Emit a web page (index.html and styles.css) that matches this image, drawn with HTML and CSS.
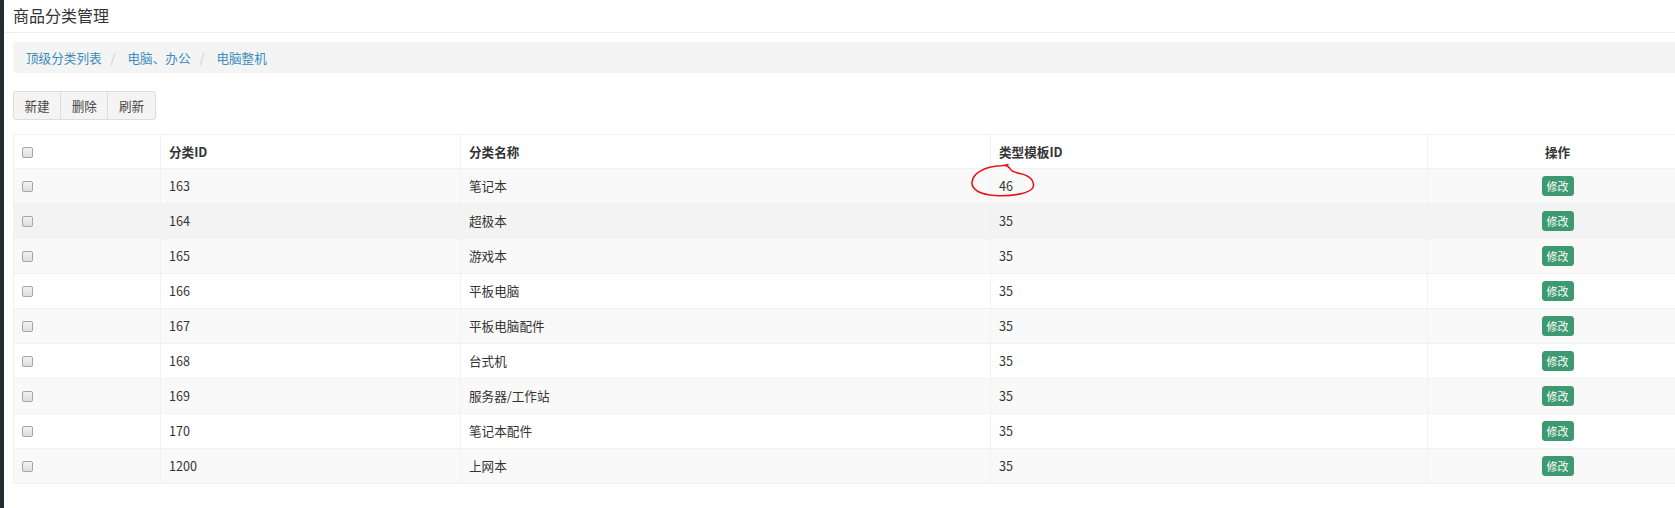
FILE: index.html
```html
<!DOCTYPE html>
<html lang="zh-CN">
<head>
<meta charset="utf-8">
<title>商品分类管理</title>
<link rel="stylesheet" href="styles.css">
</head>
<body>
<div class="app">
  <div class="sidebar"></div>
  <div class="main">
    <div class="page-header"><h1>商品分类管理</h1></div>
    <div class="content">
      <ol class="breadcrumb">
        <li><a href="#">顶级分类列表</a></li>
        <li class="sep">/</li>
        <li><a href="#">电脑、办公</a></li>
        <li class="sep">/</li>
        <li><a href="#">电脑整机</a></li>
      </ol>
      <div class="btn-group">
        <button class="btn">新建</button><button class="btn">删除</button><button class="btn">刷新</button>
      </div>
      <div class="table-wrap">
        <table class="grid">
          <colgroup>
            <col class="c1"><col class="c2"><col class="c3"><col class="c4"><col class="c5">
          </colgroup>
          <thead>
            <tr><th><span class="cb"></span></th><th>分类ID</th><th>分类名称</th><th>类型模板ID</th><th class="center">操作</th></tr>
          </thead>
          <tbody>
            <tr class="odd"><td><span class="cb"></span></td><td>163</td><td>笔记本</td><td>46</td><td class="center"><button class="edit">修改</button></td></tr>
            <tr class="hover"><td><span class="cb"></span></td><td>164</td><td>超极本</td><td>35</td><td class="center"><button class="edit">修改</button></td></tr>
            <tr class="odd"><td><span class="cb"></span></td><td>165</td><td>游戏本</td><td>35</td><td class="center"><button class="edit">修改</button></td></tr>
            <tr><td><span class="cb"></span></td><td>166</td><td>平板电脑</td><td>35</td><td class="center"><button class="edit">修改</button></td></tr>
            <tr class="odd"><td><span class="cb"></span></td><td>167</td><td>平板电脑配件</td><td>35</td><td class="center"><button class="edit">修改</button></td></tr>
            <tr><td><span class="cb"></span></td><td>168</td><td>台式机</td><td>35</td><td class="center"><button class="edit">修改</button></td></tr>
            <tr class="odd"><td><span class="cb"></span></td><td>169</td><td>服务器/工作站</td><td>35</td><td class="center"><button class="edit">修改</button></td></tr>
            <tr><td><span class="cb"></span></td><td>170</td><td>笔记本配件</td><td>35</td><td class="center"><button class="edit">修改</button></td></tr>
            <tr class="odd"><td><span class="cb"></span></td><td>1200</td><td>上网本</td><td>35</td><td class="center"><button class="edit">修改</button></td></tr>
          </tbody>
        </table>
        <svg class="annot" width="75" height="45" viewBox="0 0 75 45">
          <path d="M38 5.5 C41 5.2 43 6 44.5 8 C46 11 49 12.5 55 13.5 C65 15.5 70 21 68 27.5 C65 33.5 47 36.5 30 35.5 C16 34.5 6.5 30 7 22.5 C7.5 13 20 6.5 36 5.8 C39 5.6 41.5 5.2 43 4.5" fill="none" stroke="#e5141a" stroke-width="1.6" stroke-linecap="round"/>
        </svg>
      </div>
    </div>
  </div>
</div>
</body>
</html>
```
FILE: styles.css
```css
html, body {
  margin: 0;
  padding: 0;
  background: #fff;
  overflow: hidden;
}
body {
  font-family: "Noto Sans CJK SC", "Liberation Sans", sans-serif;
  font-size: 12.6px;
  color: #333;
}
.app {
  display: flex;
  min-height: 508px;
}
.sidebar {
  width: 4px;
  flex: 0 0 4px;
  background: #222d32;
}
.main {
  flex: 1;
  min-width: 0;
  overflow: hidden;
}
.page-header {
  height: 32px;
  border-bottom: 1px solid #eeeeee;
  padding-left: 9px;
}
.page-header h1 {
  margin: 0;
  font-size: 16px;
  font-weight: normal;
  line-height: 30px;
  color: #333;
}
.content {
  padding: 9px 0 0 9px;
  width: 1674px;
}
.breadcrumb {
  list-style: none;
  margin: 0;
  padding: 0 13px;
  height: 31px;
  display: flex;
  align-items: center;
  background: #f4f4f4;
  border-radius: 4px;
}
.breadcrumb li {
  line-height: 18px;
}
.breadcrumb a {
  color: #3c8dbc;
  text-decoration: none;
}
.breadcrumb .sep {
  color: #cccccc;
  padding: 0 12px 0 9px;
}
.btn-group {
  display: flex;
  margin-top: 18px;
}
.btn {
  font-family: inherit;
  font-size: 12.6px;
  color: #444;
  background: #f4f4f4;
  border: 1px solid #dddddd;
  height: 29px;
  padding: 0 10.5px;
  margin: 0 0 0 -1px;
  border-radius: 0;
  line-height: 27px;
}
.btn:first-child {
  margin-left: 0;
  border-radius: 3px 0 0 3px;
}
.btn:last-child {
  border-radius: 0 3px 3px 0;
}
.table-wrap {
  position: relative;
  margin-top: 14px;
}
.grid {
  width: 1674px;
  border-collapse: collapse;
  table-layout: fixed;
}
.c1 { width: 147px; }
.c2 { width: 300px; }
.c3 { width: 530px; }
.c4 { width: 437px; }
.c5 { width: 260px; }
.grid th, .grid td {
  border: 1px solid #f1f1f1;
  text-align: left;
  line-height: 18px;
  height: 18px;
  vertical-align: top;
  white-space: nowrap;
}
.grid th {
  padding: 8px 8px 7px;
  font-weight: bold;
  color: #333;
}
.grid td {
  padding: 8px;
  color: #333;
}
.grid tr.odd td { background: #f9f9f9; }
.grid tr.hover td { background: #f3f3f3; }
.grid .center { text-align: center; }
.cb {
  display: inline-block;
  width: 9px;
  height: 9px;
  border: 1px solid #a6a6a6;
  border-radius: 2px;
  background: linear-gradient(#f2f2f2, #dedede);
  vertical-align: -1px;
}
.edit {
  display: inline-block;
  font-family: inherit;
  font-size: 11px;
  line-height: 16px;
  height: 20px;
  box-sizing: border-box;
  color: #fff;
  background: #3d9970;
  border: 1px solid #3d9970;
  border-radius: 3px;
  padding: 1px 4px;
  margin: -1px 0;
  vertical-align: top;
}
.annot {
  position: absolute;
  left: 952px;
  top: 26px;
  pointer-events: none;
}
```
